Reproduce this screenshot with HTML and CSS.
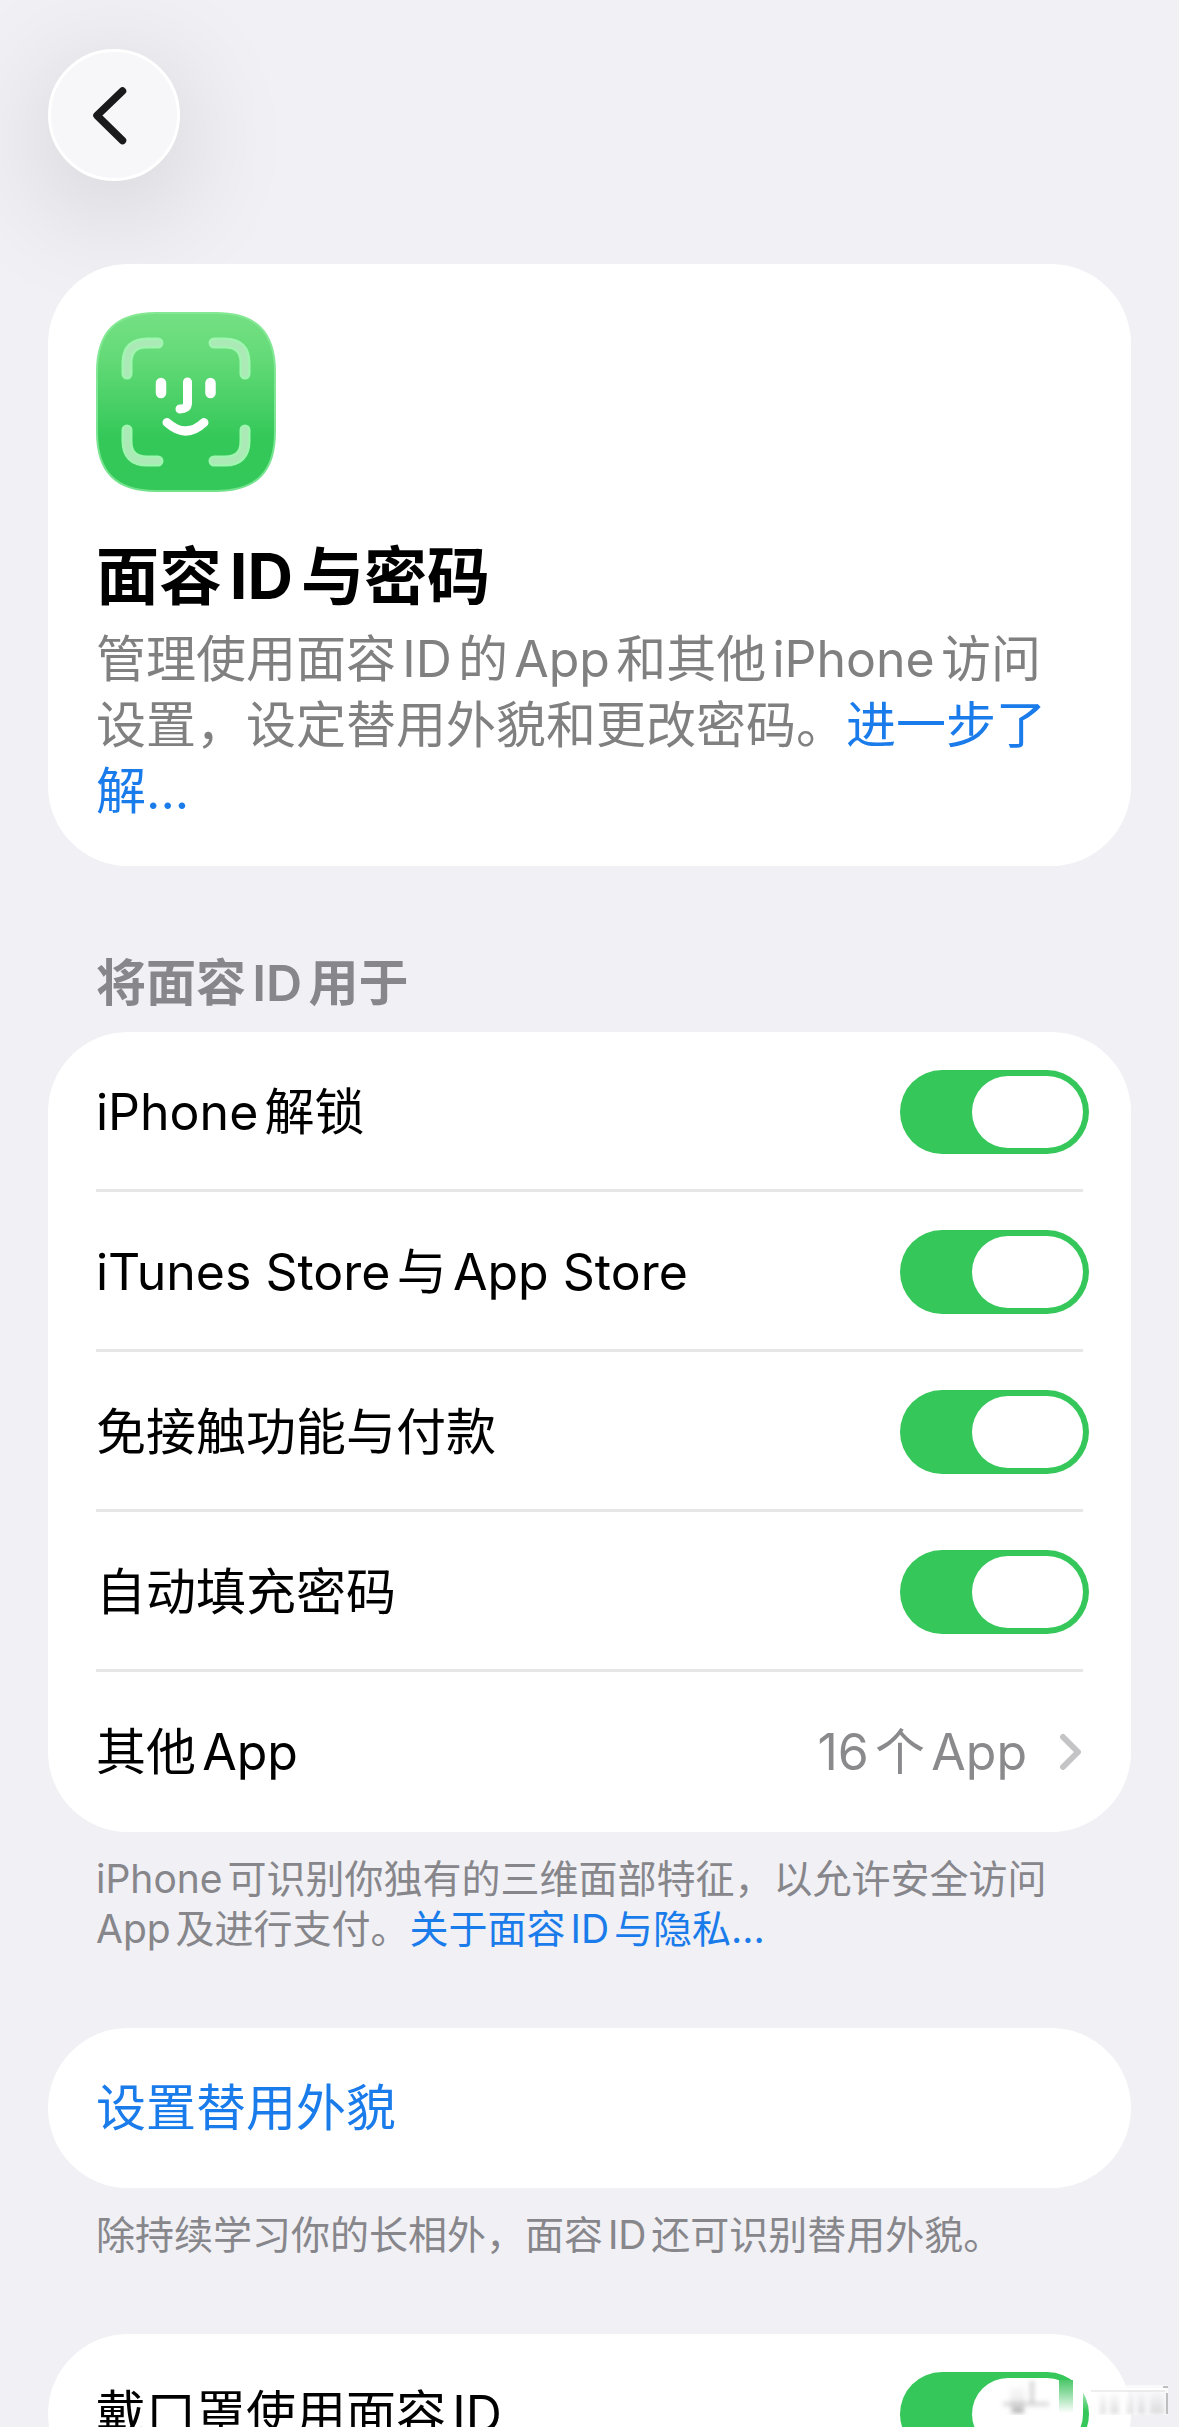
FILE: index.html
```html
<!DOCTYPE html>
<html lang="zh-CN">
<head>
<meta charset="utf-8">
<meta name="viewport" content="width=device-width, initial-scale=1">
<title>面容ID与密码</title>
<link rel="stylesheet" href="styles.css">
</head>
<body>
<div class="screen">
  <header class="navbar">
    <button class="back" type="button" aria-label="返回">
      <svg width="126" height="126" viewBox="0 0 126 126" aria-hidden="true"><path d="M71.500 39L46 63.500L71.500 88.500" fill="none" stroke="#1a1a1c" stroke-width="7.500" stroke-linecap="round" stroke-linejoin="round"/></svg>
    </button>
  </header>
  <main class="content">
    <section class="card intro">
      <svg class="app-icon" viewBox="0 0 180 180" aria-hidden="true">
        <defs>
          <linearGradient id="tile" x1="0" y1="0" x2="0" y2="1"><stop offset="0" stop-color="#74e084"/><stop offset=".25" stop-color="#64da77"/><stop offset=".7" stop-color="#34c859"/><stop offset="1" stop-color="#34c759"/></linearGradient>
          <linearGradient id="rim" x1="0" y1="0" x2="0" y2="1"><stop offset="0" stop-color="#84e893"/><stop offset=".5" stop-color="#7fe696"/><stop offset="1" stop-color="#72e28b"/></linearGradient>
        </defs>
        <path d="M60 1H120C160 1 179 20 179 60V120C179 160 160 179 120 179H60C20 179 1 160 1 120V60C1 20 20 1 60 1Z" fill="url(#tile)" stroke="url(#rim)" stroke-width="2"/>
        <g fill="none" stroke-linecap="round">
          <path d="M31 62V51Q31 31 51 31H62M118 31H129Q149 31 149 51V62M149 118V129Q149 149 129 149H118M62 149H51Q31 149 31 129V118" stroke="#a0f5b0" stroke-width="11"/>
          <path d="M31 62V51Q31 31 51 31H62M118 31H129Q149 31 149 51V62M149 118V129Q149 149 129 149H118M62 149H51Q31 149 31 129V118" stroke="#abeab6" stroke-width="6"/>
          <path d="M65 71V81M114.500 71V81" stroke="#fff" stroke-width="10.500"/>
          <path d="M91.500 70V91Q91.500 97 84 97" stroke="#fff" stroke-width="9"/>
          <path d="M71 110.500Q90 127.500 108 110.500" stroke="#fff" stroke-width="9"/>
        </g>
      </svg>
      <h1 class="title">面容ID与密码</h1>
      <p class="lead">管理使用面容ID的App和其他iPhone访问设置，设定替用外貌和更改密码。<a href="#more">进一步了解<span class="dots">...</span></a></p>
    </section>

    <section class="group">
      <h2 class="group-title">将面容ID用于</h2>
      <div class="card">
        <label class="row"><span>iPhone解锁</span><input class="switch" type="checkbox" role="switch" checked></label>
        <label class="row"><span>iTunes Store与App Store</span><input class="switch" type="checkbox" role="switch" checked></label>
        <label class="row"><span>免接触功能与付款</span><input class="switch" type="checkbox" role="switch" checked></label>
        <label class="row"><span>自动填充密码</span><input class="switch" type="checkbox" role="switch" checked></label>
        <a class="row" href="#apps"><span>其他App</span><span class="value">16个App</span><svg class="chevron" viewBox="0 0 24 40" aria-hidden="true"><path d="M4 5L19 20L4 35" fill="none" stroke="#c4c4c6" stroke-width="6" stroke-linecap="round" stroke-linejoin="round"/></svg></a>
      </div>
      <p class="note">iPhone可识别你独有的三维面部特征，以允许安全访问App及进行支付。<a href="#privacy">关于面容ID与隐私<span class="dots">...</span></a></p>
    </section>

    <section class="group">
      <div class="card">
        <button class="row action" type="button">设置替用外貌</button>
      </div>
      <p class="note">除持续学习你的长相外，面容ID还可识别替用外貌。</p>
    </section>

    <section class="group">
      <div class="card">
        <label class="row"><span>戴口罩使用面容ID</span><input class="switch" type="checkbox" role="switch" checked></label>
      </div>
    </section>
  </main>
  <svg class="smudge" viewBox="0 0 176 38" aria-hidden="true">
    <defs>
      <linearGradient id="fade-green" x1="0" y1="0" x2="0" y2="1"><stop offset="0" stop-color="#4cc76a"/><stop offset=".4" stop-color="#8fdca2"/><stop offset="1" stop-color="#fff"/></linearGradient>
      <linearGradient id="fade-white" x1="0" y1="0" x2="0" y2="1"><stop offset="0" stop-color="#fff"/><stop offset="1" stop-color="#fff" stop-opacity="0"/></linearGradient>
      <linearGradient id="fade-gray" x1="0" y1="0" x2="0" y2="1"><stop offset="0" stop-color="#888" stop-opacity=".03"/><stop offset="1" stop-color="#888" stop-opacity=".26"/></linearGradient>
      <filter id="soft" x="-50%" y="-50%" width="200%" height="200%"><feGaussianBlur stdDeviation="2"/></filter>
    </defs>
    <rect x="62" y="3" width="14" height="33" fill="url(#fade-green)"/>
    <rect x="76" y="0" width="10" height="36" fill="#fff"/>
    <rect x="86" y="0" width="7" height="34" fill="url(#fade-white)"/>
    <rect x="93" y="8" width="78" height="30" fill="#fff" opacity=".6"/>
    <g filter="url(#soft)">
      <path d="M6 27H52" stroke="#999" stroke-width="5" opacity=".3"/>
      <path d="M13 9H28V37H13Z" fill="url(#fade-gray)"/>
      <path d="M16 33H26" stroke="#777" stroke-width="5" opacity=".4"/>
      <path d="M35 4V26" stroke="#888" stroke-width="5" opacity=".3"/>
      <path d="M103 16H109V37H103ZM113 16H122V37H113ZM130 16H136V37H130ZM141 16H148V37H141ZM153 16H167V37H153Z" fill="url(#fade-gray)"/>
    </g>
    <path d="M94 14H168" stroke="#ddd" stroke-width="1"/>
    <path d="M94 12H168" stroke="#fff" stroke-width="2"/>
    <path d="M166 10H171M170 16V37" fill="none" stroke="#aaa" stroke-width="1.500"/>
  </svg>
</div>
</body>
</html>
```
FILE: styles.css
```css
* { box-sizing: border-box; }

body {
  margin: 0;
  background: #f0f0f5;
  color: #000;
  font-family: Inter, "Noto Sans CJK SC", sans-serif;
  font-size: 50px;
  line-height: 66px;
  text-autospace: normal;
}

h1, h2, p { margin: 0; }
a { color: #1a7ceb; text-decoration: none; }
button { font: inherit; border: 0; }

.screen {
  position: relative;
  height: 100vh;
  overflow: hidden;
}

.navbar { padding: 49px 48px 83px; }

.back {
  display: block;
  width: 132px;
  height: 132px;
  padding: 0;
  border: 3px solid #fff;
  border-radius: 50%;
  background: #f7f7fa;
  box-shadow: 0 24px 120px rgba(0, 0, 0, .16);
}
.back svg { display: block; }

.content { padding: 0 48px; }

.card {
  position: relative;
  background: #fff;
  border-radius: 80px;
}

.intro { padding: 48px 48px 42px; }
.app-icon { display: block; width: 180px; height: 180px; }
.title {
  margin-top: 42px;
  font-size: 63px;
  line-height: 84px;
  font-weight: 700;
}
.lead { margin-top: 8px; color: #808080; }
.dots { text-autospace: no-autospace; }

.group-title {
  padding: 84px 48px 16px;
  font-size: 50px;
  line-height: 66px;
  font-weight: 600;
  color: #86868b;
}

.row {
  display: flex;
  align-items: center;
  min-height: 160px;
  margin: 0 48px;
  color: #000;
}
.row:not(:last-child) { box-shadow: inset 0 -3px #e6e6e6; }

.action {
  width: calc(100% - 96px);
  padding: 0;
  background: none;
  color: #1a7ceb;
}

.value { margin-left: auto; color: #8a8a8d; }
.chevron { width: 24px; height: 40px; margin-left: 32px; }

.switch {
  appearance: none;
  display: flex;
  width: 189px;
  height: 84px;
  margin: 0 -6px 0 auto;
  padding: 6px;
  border-radius: 42px;
  background: #35c759;
}
.switch::before {
  content: "";
  width: 111px;
  height: 72px;
  border-radius: 36px;
  background: #fff;
}
.switch:checked { justify-content: flex-end; }

.note {
  padding: 22px 48px 74px;
  font-size: 39px;
  line-height: 50px;
  color: #86868b;
}

.smudge {
  position: absolute;
  right: 6px;
  bottom: 12px;
  width: 176px;
  height: 38px;
}
```
